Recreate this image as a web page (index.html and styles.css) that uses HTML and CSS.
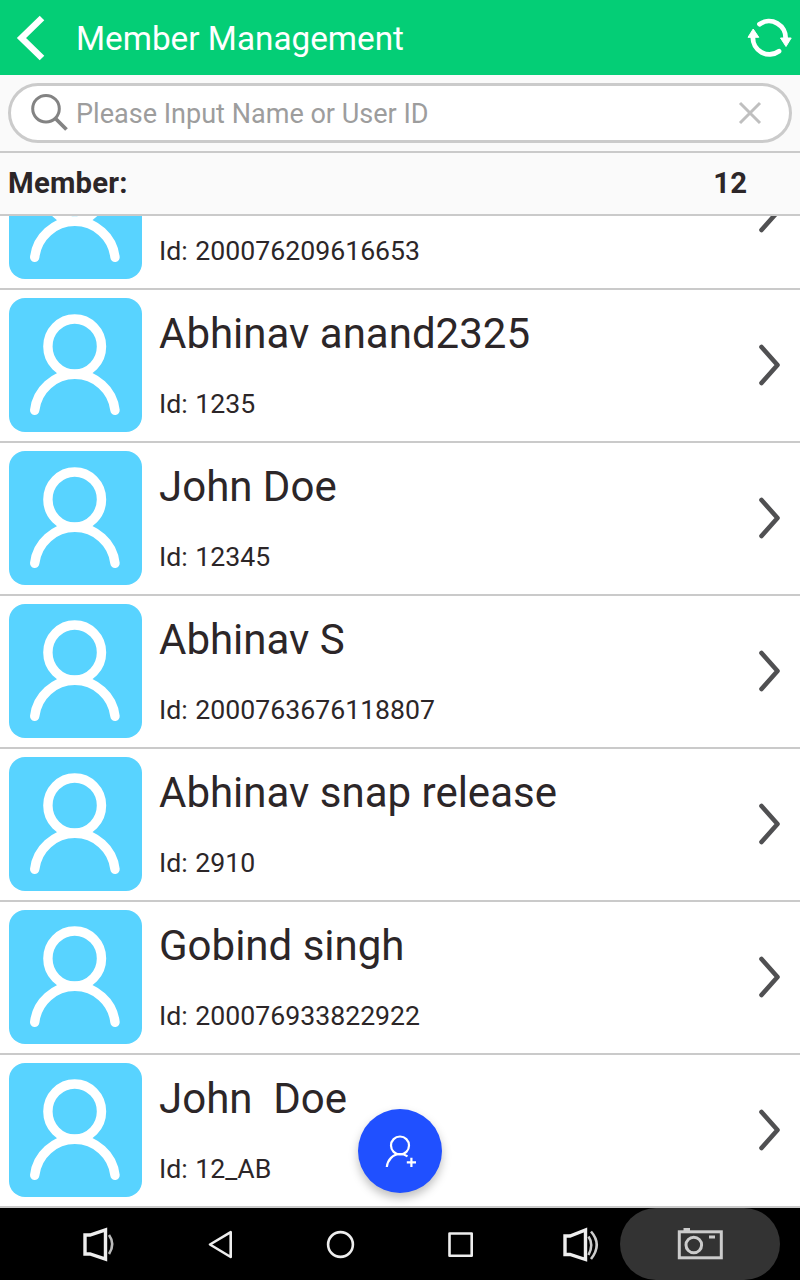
FILE: index.html
```
<!DOCTYPE html>
<html lang="en">
<head>
<meta charset="utf-8">
<title>Member Management</title>
<link rel="stylesheet" href="styles.css">
</head>
<body>
<svg class="defs" width="0" height="0">
  <symbol id="avatar" viewBox="0 0 133 134">
    <rect width="133" height="134" rx="16" fill="#58d3ff"/>
    <g fill="none" stroke="#fff" stroke-width="9.4" stroke-linecap="round">
      <ellipse cx="65.7" cy="48.500" rx="26.8" ry="27.5"/>
      <path d="M25.700 112.300A40.4 40.4 0 0 1 106 112.300"/>
    </g>
  </symbol>
  <symbol id="chevron" viewBox="0 0 24 44">
    <path d="M3.500 4 19.500 22 3.500 40" fill="none" stroke="#505052" stroke-width="4.600" stroke-linecap="round" stroke-linejoin="round"/>
  </symbol>
</svg>
<div class="screen">
  <header class="header">
    <svg class="back" width="32" height="50" viewBox="0 0 32 50"><path d="M27 5 6.500 25 27 45" fill="none" stroke="#fff" stroke-width="6.500"/></svg>
    <h1 class="title">Member Management</h1>
    <svg class="refresh" width="48" height="42" viewBox="0 0 48 42">
      <g fill="none" stroke="#fff" stroke-width="4.800" stroke-linecap="round">
        <path d="M13.500 7.200A16.500 16.500 0 0 1 39.500 22"/>
        <path d="M33 34.200A16.500 16.500 0 0 1 6.900 20"/>
      </g>
      <path d="M34.500 21H45.200L40 29.500ZM2 20.300H12.800L7.200 12Z" fill="#fff" stroke="#fff" stroke-linejoin="round"/>
    </svg>
  </header>
  <div class="search">
    <div class="field">
      <svg class="lens" width="40" height="40" viewBox="0 0 40 40" fill="none" stroke="#838383"><circle cx="16" cy="15.700" r="13.300" stroke-width="3"/><path d="M25 25 36.500 36.500" stroke-width="3.800"/></svg>
      <span class="placeholder">Please Input Name or User ID</span>
      <svg class="clear" width="24" height="24" viewBox="0 0 24 24"><path d="M2 2 22 22M22 2 2 22" stroke="#bfbfbf" stroke-width="3"/></svg>
    </div>
  </div>
  <div class="summary"><span class="label">Member:</span><span>12</span></div>
  <main class="list">
    <div class="row"><svg class="avatar"><use href="#avatar"/></svg><div class="info"><div class="name"></div><div class="id">Id: 200076209616653</div></div><svg class="chevron"><use href="#chevron"/></svg></div>
    <div class="row"><svg class="avatar"><use href="#avatar"/></svg><div class="info"><div class="name">Abhinav anand2325</div><div class="id">Id: 1235</div></div><svg class="chevron"><use href="#chevron"/></svg></div>
    <div class="row"><svg class="avatar"><use href="#avatar"/></svg><div class="info"><div class="name">John Doe</div><div class="id">Id: 12345</div></div><svg class="chevron"><use href="#chevron"/></svg></div>
    <div class="row"><svg class="avatar"><use href="#avatar"/></svg><div class="info"><div class="name">Abhinav S</div><div class="id">Id: 2000763676118807</div></div><svg class="chevron"><use href="#chevron"/></svg></div>
    <div class="row"><svg class="avatar"><use href="#avatar"/></svg><div class="info"><div class="name">Abhinav snap release</div><div class="id">Id: 2910</div></div><svg class="chevron"><use href="#chevron"/></svg></div>
    <div class="row"><svg class="avatar"><use href="#avatar"/></svg><div class="info"><div class="name">Gobind singh</div><div class="id">Id: 200076933822922</div></div><svg class="chevron"><use href="#chevron"/></svg></div>
    <div class="row"><svg class="avatar"><use href="#avatar"/></svg><div class="info"><div class="name">John  Doe</div><div class="id">Id: 12_AB</div></div><svg class="chevron"><use href="#chevron"/></svg></div>
    <button class="fab" aria-label="Add member">
      <svg width="34" height="36" viewBox="0 0 34 36" fill="none" stroke="#fff" stroke-width="2.200"><circle cx="17" cy="10.500" r="9"/><path d="M3.800 32C4.500 25 10 19 17 19Q21 19 24.500 21.300M23.800 27.300H33M28.400 22.700V32"/></svg>
    </button>
  </main>
  <nav class="navbar">
    <div class="item"><svg width="40" height="40" viewBox="0 0 40 40" fill="none" stroke="#eee" stroke-width="3.400"><path d="M5 11H10L25.500 5.800V35.200L10 30H5Z"/><path d="M29 11Q35.500 20 29 30" stroke-width="2.600" stroke="#bbb"/></svg></div>
    <div class="item"><svg width="40" height="40" viewBox="0 0 40 40" fill="none" stroke="#eee" stroke-width="2.600" stroke-linejoin="round"><path d="M10 20.500 30.700 8.200V33Z"/></svg></div>
    <div class="item"><svg width="40" height="40" viewBox="0 0 40 40" fill="none" stroke="#eee" stroke-width="2.600"><circle cx="20.500" cy="20.500" r="12.400"/></svg></div>
    <div class="item"><svg width="40" height="40" viewBox="0 0 40 40" fill="none" stroke="#eee" stroke-width="2.600" stroke-linejoin="round"><rect x="9.500" y="9.500" width="22.200" height="22.200"/></svg></div>
    <div class="item"><svg width="40" height="40" viewBox="0 0 40 40" fill="none" stroke="#eee" stroke-width="3.400"><path d="M5 12H10L25.500 6V35.500L10 30.500H5Z"/><path d="M28.500 12.500Q34 20.500 28.500 31M31 7.500Q42.500 20.500 31 35" stroke-width="2.600" stroke="#ccc"/></svg></div>
    <div class="item"><div class="pill"><svg width="48" height="36" viewBox="0 0 48 36" fill="none" stroke="#ccc" stroke-width="3"><rect x="3.300" y="5.800" width="42" height="26"/><circle cx="17.800" cy="19" r="7.800"/><path d="M7.500 3.500H14M33 11H39"/></svg></div></div>
  </nav>
</div>
</body>
</html>
```
FILE: styles.css
```
body { margin: 0; font-family: Roboto, sans-serif; color: #2c2628; background: #fff; }
.defs { display: block; }
.screen { width: 800px; height: 1280px; display: flex; flex-direction: column; overflow: hidden; }
.header { height: 75px; flex: none; display: flex; align-items: center; background: #04ce76; box-sizing: border-box; padding: 0 6px 0 15px; }
.back { flex: none; margin-right: 29px; }
.title { margin: 0; padding-top: 2px; flex: 1; font-weight: 400; font-size: 33.3px; line-height: 40px; color: #fff; white-space: nowrap; }
.refresh { flex: none; }
.search { height: 76px; flex: none; padding: 8px; box-sizing: border-box; background: #fafafa; }
.field { height: 60px; box-sizing: border-box; border: 3px solid #cbcbcb; border-radius: 30px; background: #fff; display: flex; align-items: center; padding: 0 27px 0 19px; }
.lens { flex: none; margin-right: 6px; }
.placeholder { flex: 1; padding-top: 2px; font-size: 27.05px; line-height: 32px; color: #9d9d9d; }
.summary { height: 65px; flex: none; box-sizing: border-box; border: solid #cacaca; border-width: 2px 0; background: #fafafa; display: flex; justify-content: space-between; align-items: center; padding: 0 53px 2px 8px; font-weight: 700; font-size: 29.33px; }
.label { letter-spacing: .2px; }
.list { height: 992px; flex: none; position: relative; overflow: hidden; display: flex; flex-direction: column; justify-content: flex-end; }
.row { height: 153px; flex: none; box-sizing: border-box; border-bottom: 2px solid #cacaca; display: flex; align-items: center; padding: 0 18px 1px 9px; }
.avatar { width: 133px; height: 134px; flex: none; margin-right: 17px; }
.info { flex: 1; height: 150px; }
.name { height: 50px; padding-top: 19px; font-size: 42px; line-height: 50px; white-space: pre; }
.id { padding-top: 29px; font-size: 26.67px; line-height: 32px; word-spacing: 1px; }
.chevron { width: 24px; height: 44px; flex: none; }
.fab { position: absolute; left: 358px; bottom: 15px; width: 84px; height: 84px; padding: 4px 0 0; border: 0; border-radius: 50%; background: #2050ff; display: flex; align-items: center; justify-content: center; box-shadow: 0 5px 10px rgba(0, 0, 0, .25); }
.navbar { height: 72px; flex: none; background: #000; display: flex; padding: 0 40px; box-sizing: border-box; }
.item { width: 120px; flex: none; display: flex; align-items: center; justify-content: center; }
.pill { width: 160px; height: 72px; flex: none; border-radius: 36px; background: #333; display: flex; align-items: center; justify-content: center; }
```
